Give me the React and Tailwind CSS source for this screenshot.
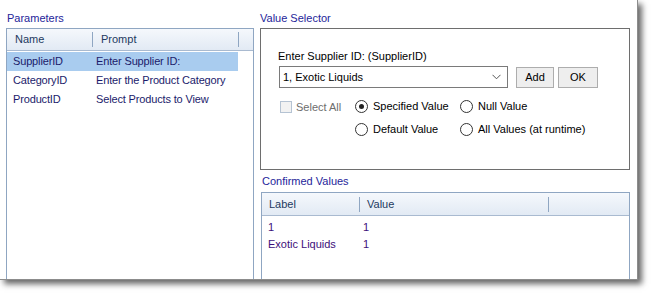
import React from 'react';

const font = { fontFamily: '"Liberation Sans", Arial, sans-serif' };

const params = [
  { name: 'SupplierID', prompt: 'Enter Supplier ID:', selected: true },
  { name: 'CategoryID', prompt: 'Enter the Product Category' },
  { name: 'ProductID', prompt: 'Select Products to View' },
];

const confirmed = [
  { label: '1', value: '1' },
  { label: 'Exotic Liquids', value: '1' },
];

function Sep() {
  return <div className="h-[15px] w-px self-center bg-[#8fa6c2]" />;
}

function Radio({ checked, label }) {
  return (
    <div className="flex items-center">
      <div className="flex h-[13px] w-[13px] items-center justify-center rounded-full border border-[#333] bg-white">
        {checked && <div className="h-[5px] w-[5px] rounded-full bg-[#222]" />}
      </div>
      <span className="ml-[5px] leading-[13px] text-black">{label}</span>
    </div>
  );
}

function Title({ children, className = '' }) {
  return (
    <div className={`leading-[13px] text-[#25259a] ${className}`}>{children}</div>
  );
}

export default function App() {
  return (
    <div className="h-[294px] w-[654px] overflow-hidden bg-white text-[11px]" style={font}>
      <div className="flex h-[280px] w-[638px] overflow-hidden border-r border-b border-[#8c8c8c] bg-white pl-[6px] shadow-[4px_4px_6px_rgba(0,0,0,0.6)]">
        {/* Parameters */}
        <div className="flex w-[248px] flex-col">
          <Title className="h-[28px] pt-[12px] pl-px">Parameters</Title>
          <div className="flex flex-1 flex-col border-x border-t border-[#8fa6c2]">
            <div className="flex h-[22px] border-b border-[#a9bad0] bg-gradient-to-b from-[#f5f8fc] to-[#e2eaf4] text-[#1e3a5f]">
              <div className="flex w-[85px] items-center pl-[8px]">Name</div>
              <Sep />
              <div className="flex w-[145px] items-center pl-[8px]">Prompt</div>
              <Sep />
            </div>
            <div className="pt-px">
              {params.map((p) => (
                <div
                  key={p.name}
                  className={`flex h-[19px] w-[231px] items-center pl-[6px] tracking-[-0.15px] text-[#1b1b6b] ${p.selected ? 'bg-[#a9ccef]' : ''}`}
                >
                  <span className="w-[83px]">{p.name}</span>
                  <span>{p.prompt}</span>
                </div>
              ))}
            </div>
          </div>
        </div>

        {/* Value selector */}
        <div className="ml-[6px] flex w-[370px] flex-col">
          <Title className="h-[28px] pt-[12px]">Value Selector</Title>
          <div className="h-[142px] border border-[#6e6e6e] pt-[21px] pl-[17px]">
            <div className="h-[13px] leading-[13px] text-black">Enter Supplier ID: (SupplierID)</div>
            <div className="mt-[3px] flex items-start">
              <div className="ml-px flex h-[22px] w-[229px] items-center justify-between border border-[#7a7a7a] bg-white pr-[6px] pl-[3px] text-black">
                <span>1, Exotic Liquids</span>
                <svg width="9" height="6" viewBox="0 0 9 6" fill="none">
                  <path d="M0.5 0.8 L4.5 4.8 L8.5 0.8" stroke="#555" strokeWidth="1" />
                </svg>
              </div>
              <button className="mt-px ml-[8px] flex h-[21px] w-[38px] items-center justify-center border border-[#adadad] bg-[#eeeeee] text-black">
                Add
              </button>
              <button className="mt-px ml-[4px] flex h-[21px] w-[40px] items-center justify-center border border-[#adadad] bg-[#eeeeee] text-black">
                OK
              </button>
            </div>
            <div className="mt-[11px] ml-[2px] flex h-[14px] items-center">
              <div className="flex w-[75px] items-center pt-[2px]">
                <div className="h-[12px] w-[12px] border border-[#b5c3d3] bg-[#f2f2f2]" />
                <span className="ml-[4px] leading-[13px] text-[#6d6d6d]">Select All</span>
              </div>
              <div className="w-[105px]">
                <Radio checked label="Specified Value" />
              </div>
              <Radio label="Null Value" />
            </div>
            <div className="mt-[9px] ml-[77px] flex h-[14px] items-center">
              <div className="w-[105px]">
                <Radio label="Default Value" />
              </div>
              <Radio label="All Values (at runtime)" />
            </div>
          </div>
          <Title className="h-[22px] pt-[5px] pl-[2px]">Confirmed Values</Title>
          <div className="ml-px flex-1 border-x border-t border-[#8fa6c2]">
            <div className="flex h-[23px] border-b border-[#a9bad0] bg-gradient-to-b from-[#f5f8fc] to-[#e2eaf4] text-[#1e3a5f]">
              <div className="flex w-[97px] items-center pl-[7px]">Label</div>
              <Sep />
              <div className="flex w-[188px] items-center pl-[7px]">Value</div>
              <Sep />
            </div>
            <div className="pt-[3px]">
              {confirmed.map((c) => (
                <div key={c.label} className="flex h-[17px] items-center pl-[6px] text-[#3d0f7a]">
                  <span className="w-[95px]">{c.label}</span>
                  <span>{c.value}</span>
                </div>
              ))}
            </div>
          </div>
        </div>
      </div>
    </div>
  );
}
